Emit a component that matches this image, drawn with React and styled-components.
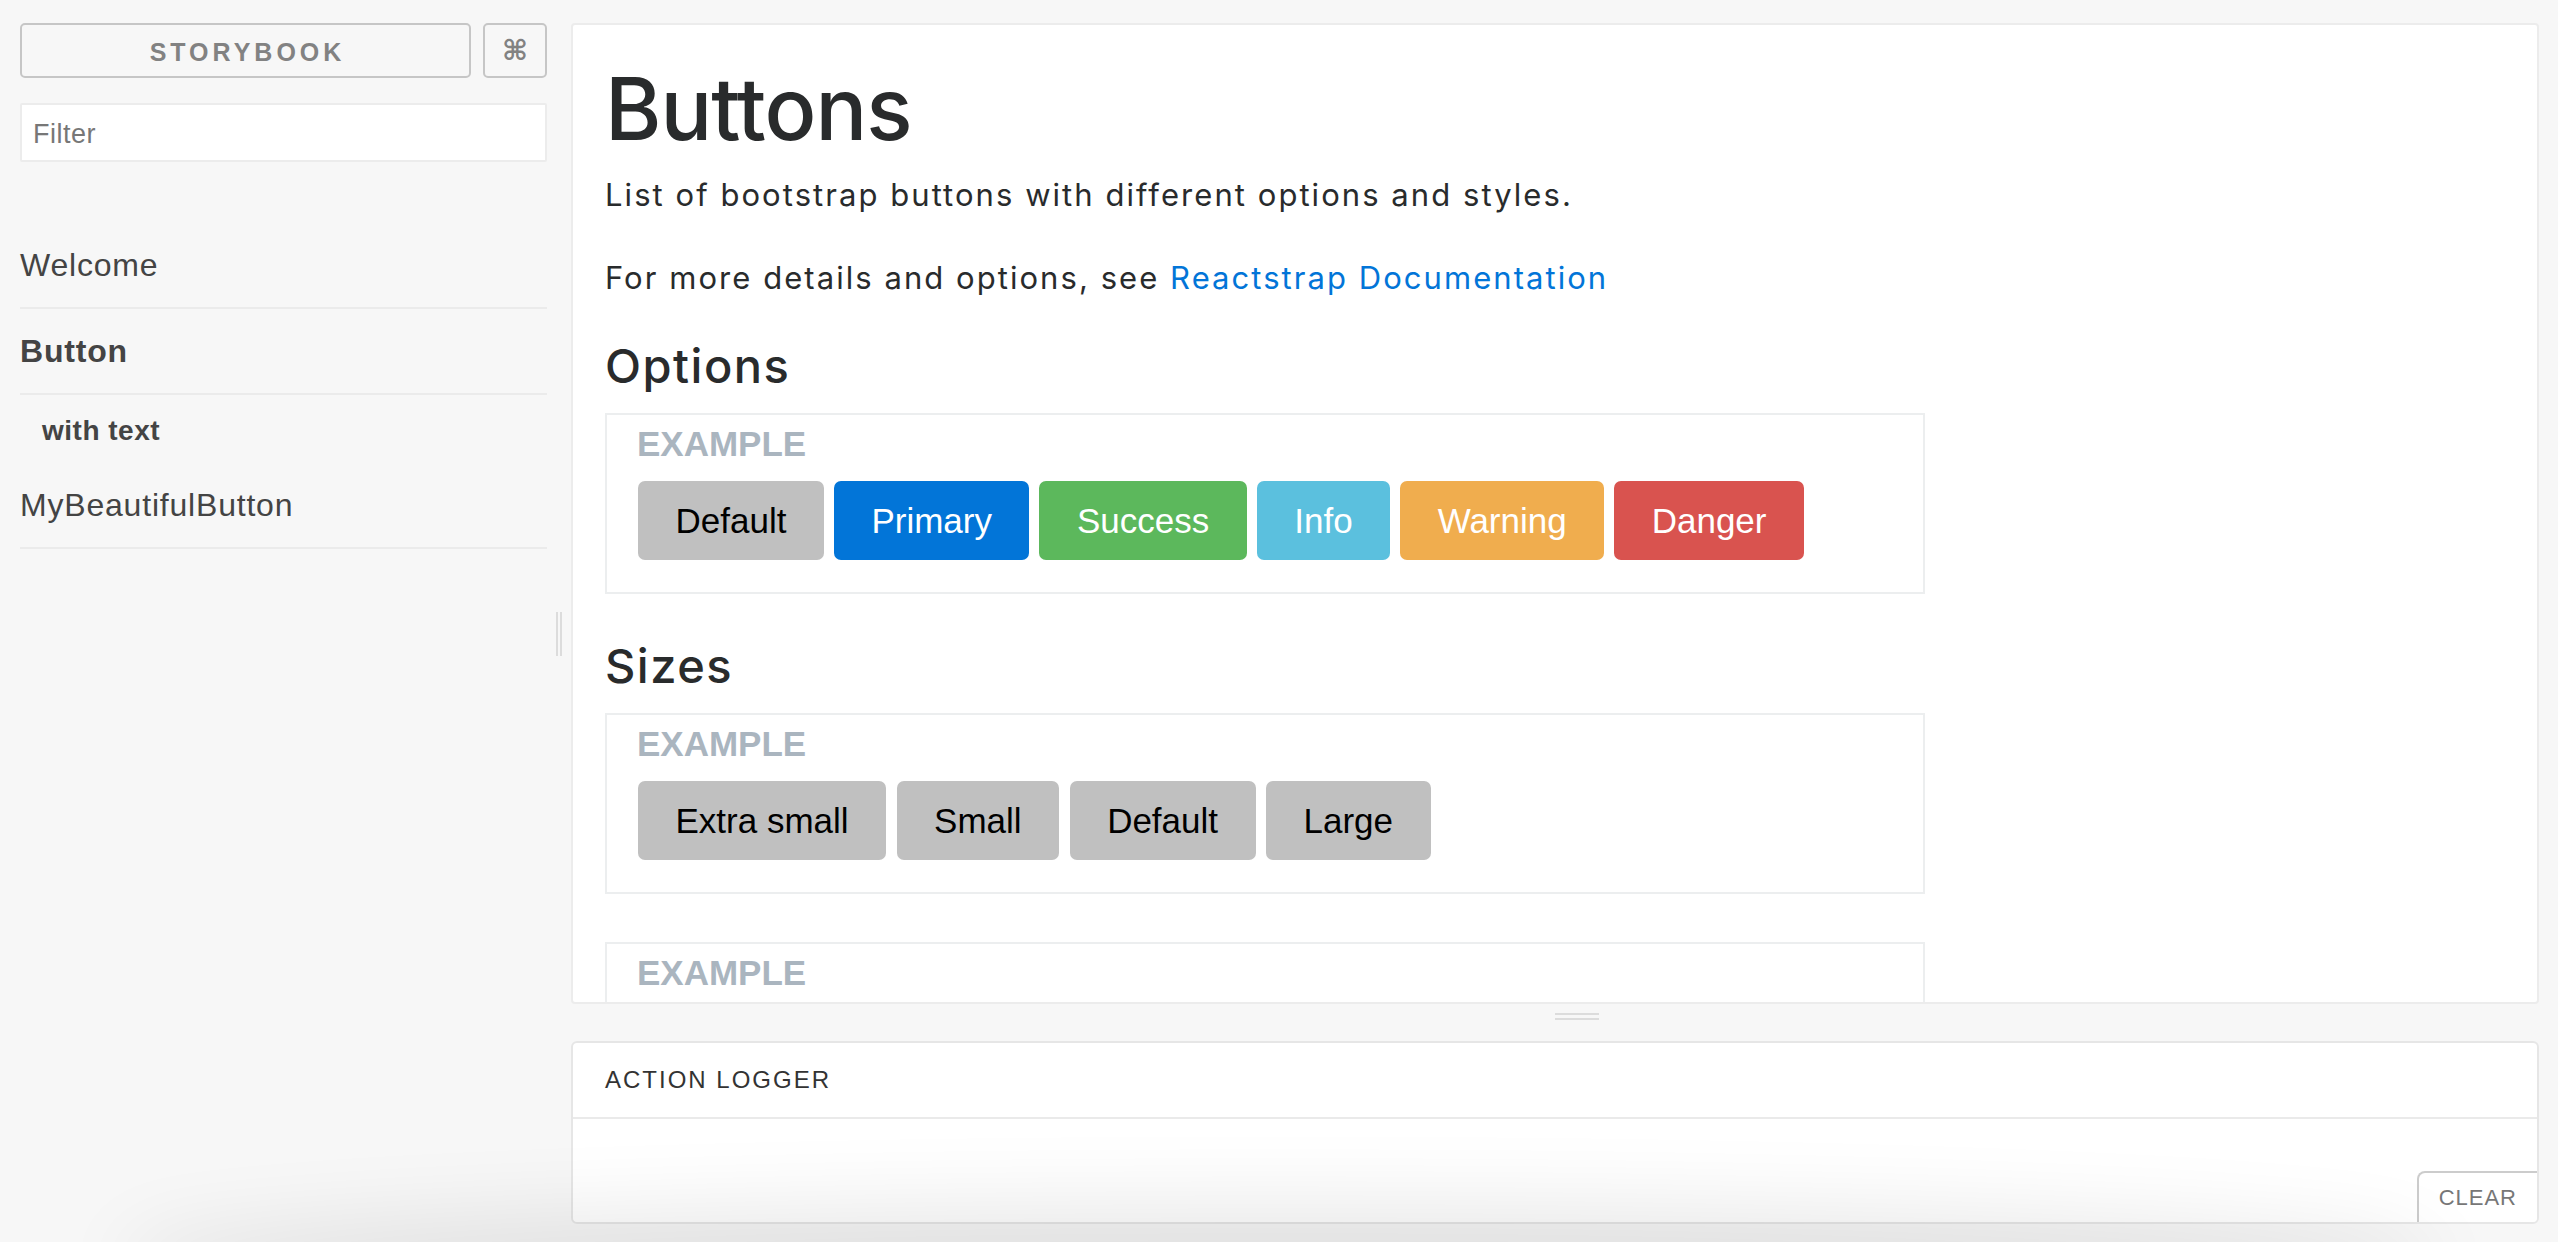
import React from 'react';
import styled, { createGlobalStyle } from 'styled-components';

const GlobalStyle = createGlobalStyle`
  html, body { margin: 0; padding: 0; height: 100%; }
  body {
    background: #f7f7f7;
    font-family: "Liberation Sans", Arial, sans-serif;
    overflow: hidden;
  }
  *, *::before, *::after { box-sizing: border-box; }
`;

const Page = styled.div`
  display: flex;
  height: 100vh;
  padding: 23px 19px 18px 20px;
`;

/* ---------- Sidebar ---------- */
const Sidebar = styled.aside`
  width: 527px;
  flex: none;
  display: flex;
  flex-direction: column;
`;

const HeaderRow = styled.div`
  display: flex;
  gap: 12px;
  height: 55px;
`;

const BrandButton = styled.a`
  flex: 1;
  display: flex;
  align-items: center;
  justify-content: center;
  border: 2px solid #c6c6c6;
  border-radius: 5px;
  color: #828282;
  font-size: 25px;
  font-weight: bold;
  letter-spacing: 4px;
  padding: 3px 0 0 4px;
  text-transform: uppercase;
  text-decoration: none;
`;

const ShortcutButton = styled.button`
  width: 64px;
  padding: 0;
  border: 2px solid #c6c6c6;
  border-radius: 5px;
  background: transparent;
  color: #828282;
  font-family: "DejaVu Sans", sans-serif;
  font-size: 28px;
  font-weight: bold;
  display: flex;
  align-items: center;
  justify-content: center;
`;

const FilterInput = styled.input`
  margin-top: 25px;
  height: 59px;
  border: 2px solid #ececec;
  border-radius: 2px;
  background: #fff;
  padding: 4px 11px 0;
  font-family: "Liberation Sans", Arial, sans-serif;
  font-size: 27px;
  color: #444;
  outline: none;
  &::placeholder { color: #777; letter-spacing: 0.5px; }
`;

const StoryList = styled.ul`
  list-style: none;
  margin: 61px 0 0;
  padding: 0;
`;

const KindItem = styled.li`
  font-size: 32px;
  letter-spacing: 0.8px;
  line-height: 44px;
  padding: 20px 0;
  color: #444;
  border-bottom: 2px solid #ebebeb;
  font-weight: ${p => (p.$selected ? 'bold' : 'normal')};
`;

const StoryItem = styled.li`
  font-size: 28px;
  letter-spacing: 0.5px;
  line-height: 40px;
  padding: 16px 0 12px 22px;
  color: #444;
  font-weight: ${p => (p.$selected ? 'bold' : 'normal')};
`;

/* ---------- Resizers ---------- */
const VResizer = styled.div`
  width: 24px;
  flex: none;
  display: flex;
  justify-content: center;
  padding-top: 589px;
`;

const VHandle = styled.div`
  width: 6px;
  height: 44px;
  border-left: 2px solid #dcdcdc;
  border-right: 2px solid #dcdcdc;
`;

const HResizer = styled.div`
  height: 37px;
  flex: none;
  padding: 9px 0 0 50%;
`;

const HHandle = styled.div`
  width: 44px;
  height: 7px;
  border-top: 2px solid #dcdcdc;
  border-bottom: 2px solid #dcdcdc;
`;

/* ---------- Main ---------- */
const Main = styled.main`
  flex: 1;
  min-width: 0;
  display: flex;
  flex-direction: column;
`;

const Preview = styled.section`
  flex: 1;
  min-height: 0;
  background: #fff;
  border: 2px solid #ececec;
  border-radius: 4px;
  overflow: hidden;
`;

const PreviewContent = styled.div`
  padding: 41px 0 0 32px;
  font-family: Inter, "Open Sans", sans-serif;
  color: #292b2c;
`;

const Title = styled.h1`
  margin: 0 0 24px;
  font-size: 86px;
  font-weight: 500;
  line-height: 86px;
  letter-spacing: -1px;
`;

const Paragraph = styled.p`
  margin: 0 0 46px;
  font-size: 31px;
  line-height: 37px;
  letter-spacing: 2.05px;
`;

const DocLink = styled.a`
  color: #0275d8;
  text-decoration: none;
`;

const SectionTitle = styled.h2`
  margin: 0 0 24px;
  font-size: 47px;
  font-weight: 500;
  line-height: 47px;
  letter-spacing: 1.5px;
`;

const ExampleBox = styled.div`
  width: 1320px;
  border: 2px solid #eceeef;
  padding: 9px 30px 32px;
  margin-bottom: 48px;
`;

const ExampleLabel = styled.div`
  font-family: "Liberation Sans", Arial, sans-serif;
  font-size: 35px;
  font-weight: bold;
  line-height: 40px;
  color: #aab5bf;
  text-transform: uppercase;
`;

const ButtonRow = styled.div`
  display: flex;
  gap: ${p => p.$gap}px;
  margin-top: 17px;
  padding-left: 1px;
`;

const variants = {
  default: ['#c0c0c0', '#000'],
  primary: ['#0275d8', '#fff'],
  success: ['#5cb85c', '#fff'],
  info: ['#5bc0de', '#fff'],
  warning: ['#f0ad4e', '#fff'],
  danger: ['#d9534f', '#fff'],
};

const Btn = styled.button`
  height: 79px;
  padding: 0 37.5px;
  border: none;
  border-radius: 7px;
  font-family: "Liberation Sans", Arial, sans-serif;
  font-size: 35px;
  background: ${p => variants[p.$variant][0]};
  color: ${p => variants[p.$variant][1]};
`;

/* ---------- Action logger ---------- */
const Logger = styled.section`
  height: 183px;
  flex: none;
  display: flex;
  flex-direction: column;
  background: #fff;
  border: 2px solid #e6e6e6;
  border-radius: 6px;
  overflow: hidden;
`;

const LoggerHeader = styled.div`
  height: 76px;
  flex: none;
  display: flex;
  align-items: center;
  padding-left: 32px;
  border-bottom: 2px solid #eaeaea;
  font-size: 24px;
  letter-spacing: 2px;
  color: #333;
  text-transform: uppercase;
`;

const LoggerBody = styled.div`
  flex: 1;
  position: relative;
`;

const ClearButton = styled.button`
  position: absolute;
  right: 0;
  bottom: 0;
  height: 51px;
  padding: 0 20px;
  border: none;
  border-top: 2px solid rgba(0, 0, 0, 0.2);
  border-left: 2px solid rgba(0, 0, 0, 0.2);
  border-top-left-radius: 8px;
  background: rgba(255, 255, 255, 0.5);
  font-family: "Liberation Sans", Arial, sans-serif;
  font-size: 22px;
  letter-spacing: 1px;
  color: #777;
  text-transform: uppercase;
`;

const BottomShade = styled.div`
  position: fixed;
  left: 160px;
  right: 160px;
  bottom: -40px;
  height: 40px;
  border-radius: 50%;
  box-shadow: 0 0 80px 40px rgba(0, 0, 0, 0.09);
  pointer-events: none;
`;

const optionButtons = [
  ['default', 'Default'],
  ['primary', 'Primary'],
  ['success', 'Success'],
  ['info', 'Info'],
  ['warning', 'Warning'],
  ['danger', 'Danger'],
];

const sizeButtons = ['Extra small', 'Small', 'Default', 'Large'];

export default function App() {
  return (
    <>
      <GlobalStyle />
      <Page>
        <Sidebar>
          <HeaderRow>
            <BrandButton href="#">Storybook</BrandButton>
            <ShortcutButton>⌘</ShortcutButton>
          </HeaderRow>
          <FilterInput placeholder="Filter" />
          <StoryList>
            <KindItem>Welcome</KindItem>
            <KindItem $selected>Button</KindItem>
            <StoryItem $selected>with text</StoryItem>
            <KindItem>MyBeautifulButton</KindItem>
          </StoryList>
        </Sidebar>
        <VResizer>
          <VHandle />
        </VResizer>
        <Main>
          <Preview>
            <PreviewContent>
              <Title>Buttons</Title>
              <Paragraph>List of bootstrap buttons with different options and styles.</Paragraph>
              <Paragraph>
                For more details and options, see <DocLink href="#">Reactstrap Documentation</DocLink>
              </Paragraph>
              <SectionTitle>Options</SectionTitle>
              <ExampleBox>
                <ExampleLabel>Example</ExampleLabel>
                <ButtonRow $gap={10}>
                  {optionButtons.map(([v, label]) => (
                    <Btn key={v} $variant={v}>{label}</Btn>
                  ))}
                </ButtonRow>
              </ExampleBox>
              <SectionTitle>Sizes</SectionTitle>
              <ExampleBox>
                <ExampleLabel>Example</ExampleLabel>
                <ButtonRow $gap={10.5}>
                  {sizeButtons.map(label => (
                    <Btn key={label} $variant="default">{label}</Btn>
                  ))}
                </ButtonRow>
              </ExampleBox>
              <ExampleBox>
                <ExampleLabel>Example</ExampleLabel>
              </ExampleBox>
            </PreviewContent>
          </Preview>
          <HResizer>
            <HHandle />
          </HResizer>
          <Logger>
            <LoggerHeader>Action Logger</LoggerHeader>
            <LoggerBody>
              <ClearButton>Clear</ClearButton>
            </LoggerBody>
          </Logger>
        </Main>
      </Page>
      <BottomShade />
    </>
  );
}
